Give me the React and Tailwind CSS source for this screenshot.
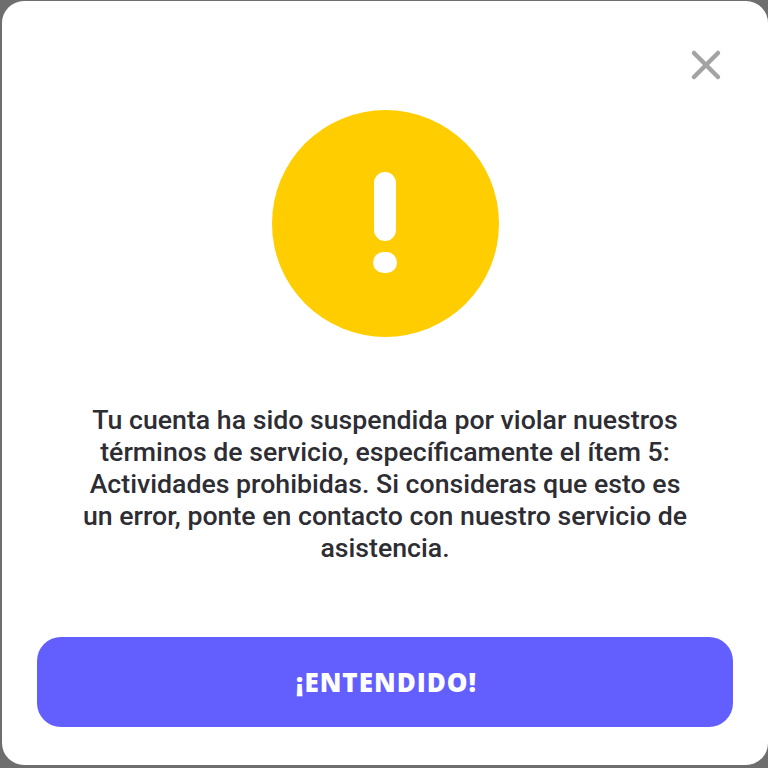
import React from 'react';

export default function App() {
    return (
        <div className="h-[768px] w-[768px] bg-[#6e6e6e] pl-[2px] pt-px pb-[3px]">
            <div className="flex h-full flex-col items-center rounded-[22px] bg-white">
                <div className="flex w-full justify-end pr-[45px] pt-[47px]">
                    <button className="text-[#a3a3a3]">
                        <svg className="block h-[34px] w-[34px]" viewBox="0 0 34 34" fill="none" stroke="currentColor" strokeWidth="4.5" strokeLinecap="round">
                            <path d="M5 5l24 24M29 5L5 29" />
                        </svg>
                    </button>
                </div>
                <div className="mt-[28px] flex h-[227px] w-[227px] flex-col items-center rounded-full bg-[#ffcd00] pt-[62px]">
                    <div className="h-[69px] w-[22px] rounded-full bg-white" />
                    <div className="mt-[11px] h-[21px] w-[24px] rounded-full bg-white" />
                </div>
                <p className="mt-[67px] w-[620px] text-center font-['Roboto',sans-serif] text-[26.7px] leading-[32px] font-medium text-[#2d2d33]">
                    Tu cuenta ha sido suspendida por violar nuestros términos de servicio, específicamente el ítem 5: Actividades prohibidas. Si consideras que esto es un error, ponte en contacto con nuestro servicio de asistencia.
                </p>
                <button className="mt-[73px] h-[90px] w-[696px] rounded-[24px] bg-[#635fff] pl-[3px] font-['Open_Sans',sans-serif] text-[26px] font-extrabold tracking-[1px] text-white">
                    ¡ENTENDIDO!
                </button>
            </div>
        </div>
    );
}
